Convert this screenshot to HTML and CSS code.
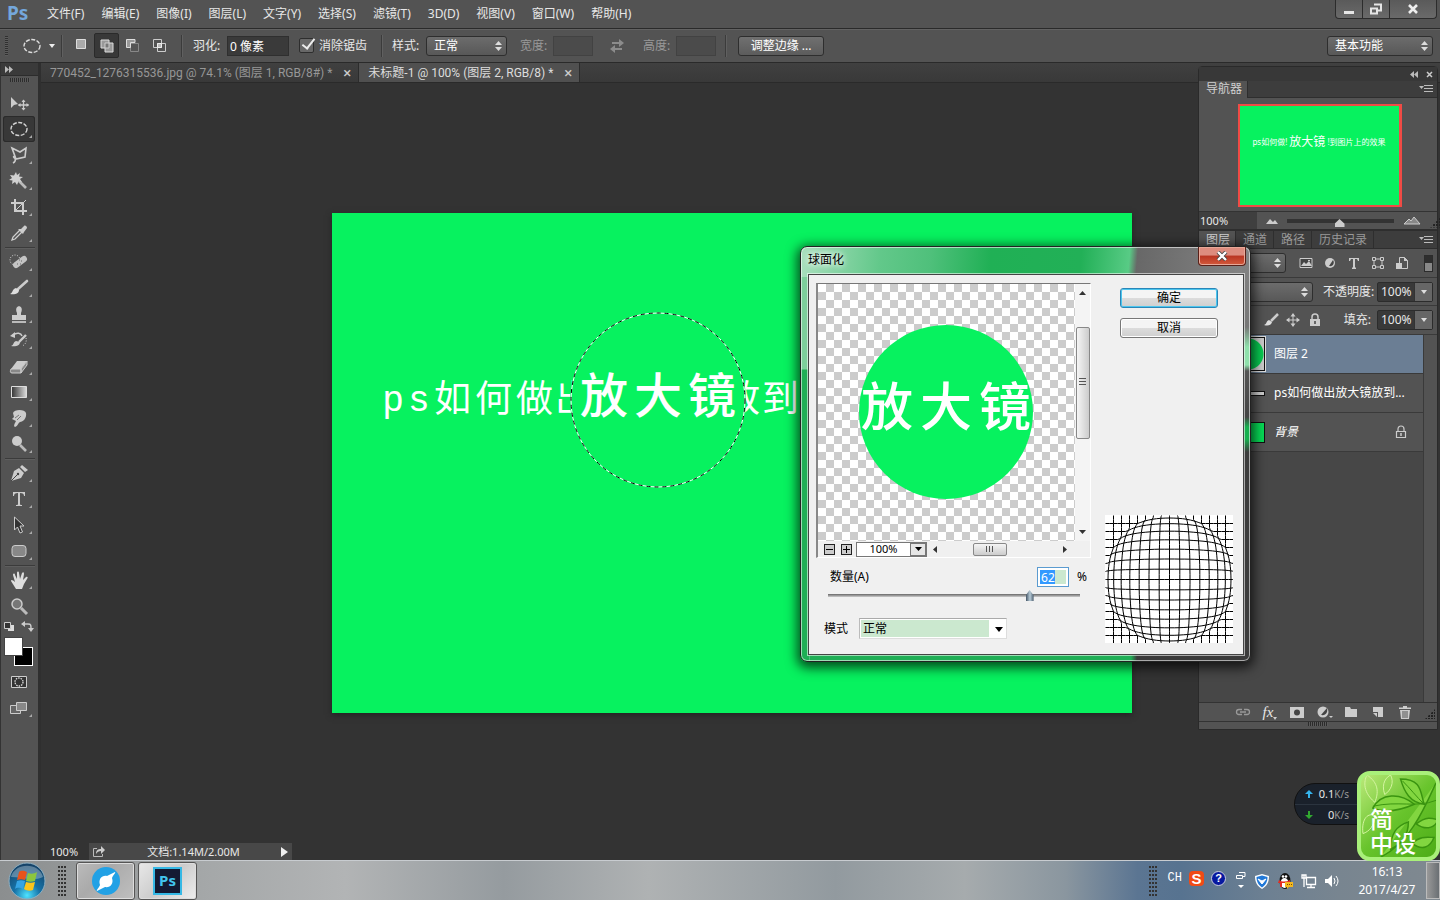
FILE: index.html
```html
<!DOCTYPE html>
<html lang="zh-CN">
<head>
<meta charset="utf-8">
<title>未标题-1</title>
<link rel="stylesheet" href="styles.css">
</head>
<body>
<header class="menubar">
  <span class="logo">Ps</span>
  <nav class="menus">
    <button>文件(F)</button><button>编辑(E)</button><button>图像(I)</button><button>图层(L)</button><button>文字(Y)</button><button>选择(S)</button><button>滤镜(T)</button><button>3D(D)</button><button>视图(V)</button><button>窗口(W)</button><button>帮助(H)</button>
  </nav>
  <div class="winbtns">
    <button aria-label="最小化"><svg width="12" height="12"><path d="M1 8h10v3H1z" fill="#e6e6e6"/></svg></button>
    <button aria-label="还原"><svg width="14" height="12"><path d="M5 1.500h7v6H9M2 5.500h6v5H2z" fill="none" stroke="#e6e6e6" stroke-width="2"/></svg></button>
    <button class="wide" aria-label="关闭"><svg width="12" height="10"><path d="M2 1l8 8M10 1L2 9" stroke="#eee" stroke-width="2.600"/></svg></button>
  </div>
</header>

<section class="options">
  <i class="grip-v"></i>
  <button class="tool-preset" aria-label="椭圆选框"><svg width="36" height="20"><ellipse cx="12" cy="10" rx="8" ry="6.500" fill="none" stroke="#ddd" stroke-width="1.400" stroke-dasharray="4 1.500"/><path d="M29 8h6l-3 4z" fill="#eee"/></svg></button>
  <i class="sep"></i>
  <div class="ops">
    <button aria-label="新选区"><svg width="16" height="16"><path d="M3.500 1.500h9v9h-9z" fill="#aaa" stroke="#ddd"/></svg></button>
    <button class="on" aria-label="添加到选区"><svg width="16" height="16"><path d="M2 2h8v3h4v9H6v-4H2z" fill="#999" stroke="#ddd"/><path d="M6 10V5h4v5z" fill="#777" stroke="#ccc"/></svg></button>
    <button aria-label="从选区减去"><svg width="16" height="16"><path d="M5.500 5.500h8v8h-8z" fill="#555" stroke="#888"/><path d="M2 1.500h8v3H5.500v5H1.500v-8z" fill="#999" stroke="#ddd"/></svg></button>
    <button aria-label="与选区交叉"><svg width="16" height="16"><path d="M2.500 1.500h8v8h-8zM6.500 5.500h8v8h-8z" fill="none" stroke="#ccc"/><path d="M6.500 5.500h4v4h-4z" fill="#bbb" stroke="#eee"/></svg></button>
  </div>
  <i class="sep"></i>
  <label class="lbl" for="feather">羽化:</label>
  <input class="field w62" id="feather" value="0 像素">
  <label class="check"><input type="checkbox" checked><span>消除锯齿</span></label>
  <i class="sep"></i>
  <label class="lbl" for="style">样式:</label>
  <span class="sel w80"><select id="style"><option>正常</option></select><svg width="7" height="12"><path d="M0 5l3.500-4L7 5zM0 7l3.500 4L7 7z" fill="#ddd"/></svg></span>
  <label class="lbl off" for="ow">宽度:</label>
  <input class="field w40 off" id="ow" disabled>
  <button class="swap" aria-label="交换"><svg width="16" height="14"><path d="M3 3h7V0l5 4-5 4V5H3zM13 9H6V6l-5 4 5 4v-3h7z" fill="#8c8c8c"/></svg></button>
  <label class="lbl off" for="oh">高度:</label>
  <input class="field w40 off" id="oh" disabled>
  <i class="sep last"></i>
  <button class="btn">调整边缘 ...</button>
  <span class="sel workspace"><select aria-label="工作区"><option>基本功能</option></select><svg width="7" height="12"><path d="M0 5l3.500-4L7 5zM0 7l3.500 4L7 7z" fill="#ddd"/></svg></span>
</section>

<main class="work">
  <aside class="tools">
    <div class="tools-head"><svg width="8" height="7"><path d="M0 0l4 3.500L0 7zM4 0l4 3.500L4 7z" fill="#bbb"/></svg></div>
    <div class="tools-grip"><i class="grip-h"></i></div>
    <button class="solo" aria-label="移动"><svg viewBox="0 0 20 20"><path d="M2 4v11l3-3 4-1z" fill="#ccc"/><path d="M14.500 7v10M9.500 12h10" stroke="#ccc" stroke-width="1.300"/><path d="M12.500 9l2-2.500 2 2.500zM12.500 15l2 2.500 2-2.500zM11.500 10L9 12l2.500 2zM17.500 10l2.500 2-2.500 2z" fill="#ccc"/></svg></button>
    <button class="on" aria-label="椭圆选框"><svg viewBox="0 0 20 20"><ellipse cx="10" cy="10" rx="8" ry="6.500" fill="none" stroke="#d4d4d4" stroke-width="1.400" stroke-dasharray="4 1.500"/></svg></button>
    <button aria-label="套索"><svg viewBox="0 0 20 20"><path d="M3 3l8 4 6-4-1 9-9 2zM7 14c-4-2-2-4-1-1s0 4-2 5" fill="none" stroke="#ccc" stroke-width="1.600"/></svg></button>
    <button aria-label="魔棒"><svg viewBox="0 0 20 20"><path d="M10 10l7 7" stroke="#bbb" stroke-width="2.600"/><path d="M7 1l1 3 3-2-1 3.500 4 .5-3 2 2 3-3.500-.5L8 14l-2-3-3 2 .5-3.500L0 9l3-2-2-3 4 .5z" fill="#d0d0d0"/></svg></button>
    <button aria-label="裁剪"><svg viewBox="0 0 20 20"><path d="M6 2v12h12M2 6h12v12" fill="none" stroke="#ccc" stroke-width="2"/><path d="M6 14L17 3" stroke="#ccc"/></svg></button>
    <button aria-label="吸管"><svg viewBox="0 0 20 20"><path d="M3 17l1-3 7-7 2 2-7 7z" fill="#555" stroke="#d0d0d0" stroke-width="1.300"/><path d="M9 6l5 5 1-2 3-4c0-2-2-3-3-2l-3 3z" fill="#ccc"/></svg></button>
    <hr>
    <button aria-label="修复画笔"><svg viewBox="0 0 20 20"><circle cx="6" cy="8" r="5" fill="none" stroke="#ddd" stroke-dasharray="1 1.500"/><path d="M7 13l8-6" stroke="#c4c4c4" stroke-width="6" stroke-linecap="round"/><path d="M8 12h1M12 9h1M10 8h1M11 12h1" stroke="#666" stroke-width="1.200"/></svg></button>
    <button aria-label="画笔"><svg viewBox="0 0 20 20"><path d="M18 3L9 11" stroke="#ccc" stroke-width="2.600" stroke-linecap="round"/><path d="M10 12c0 4-5 5-9 4 3-1 2-5 6-6z" fill="#ddd"/></svg></button>
    <button aria-label="图章"><svg viewBox="0 0 20 20"><path d="M8 9C4 0 16 0 12 9v2h5v5H3v-5h5z" fill="#ccc"/><path d="M3 18h14" stroke="#ddd" stroke-width="1.500"/></svg></button>
    <button aria-label="历史画笔"><svg viewBox="0 0 20 20"><path d="M17 5l-7 7" stroke="#ccc" stroke-width="2.400"/><path d="M11 12c0 4-5 5-9 4 3-1 2-4 5-5z" fill="#ccc"/><path d="M4 5c4-3 8-2 9 1" fill="none" stroke="#ccc" stroke-width="1.500"/><path d="M1 6l5-4v6z" fill="#ccc"/><path d="M17 8c1 4-1 7-4 8" fill="none" stroke="#ccc" stroke-dasharray="1 1.500"/></svg></button>
    <button aria-label="橡皮擦"><svg viewBox="0 0 20 20"><path d="M2 13l6-8h10l-6 8z" fill="#ccc"/><path d="M2 13h10v4H3c-2 0-2-2-1-4zM12 13l6-8v4l-6 8z" fill="#888" stroke="#ccc"/></svg></button>
    <button aria-label="渐变"><svg viewBox="0 0 20 20"><defs><linearGradient id="gr"><stop stop-color="#333"/><stop offset="1" stop-color="#ddd"/></linearGradient></defs><path d="M2.500 4.500h15v11h-15z" fill="url(#gr)" stroke="#ddd"/></svg></button>
    <button aria-label="涂抹"><svg viewBox="0 0 20 20"><path d="M4 5c1-4 12-4 13 0 1 5-3 9-6 9-2 1-2 4-5 5-2-1 0-4 1-6l-4-2 2-2z" fill="#ccc"/><path d="M6 10l4-3M8 12l4-4" stroke="#777"/></svg></button>
    <button aria-label="减淡"><svg viewBox="0 0 20 20"><circle cx="8" cy="7" r="5" fill="#ccc"/><path d="M11 11l6 6" stroke="#bbb" stroke-width="2.600"/></svg></button>
    <hr>
    <button aria-label="钢笔"><svg viewBox="0 0 20 20"><path d="M2 18l3-10 5-3 5 5-3 5z" fill="#ccc"/><path d="M11 4l2-2 6 5-3 2z" fill="#ccc"/><path d="M2 18l6-6" stroke="#444"/><circle cx="9" cy="11" r="1.200" fill="#444"/></svg></button>
    <button aria-label="文字"><svg viewBox="0 0 20 20"><path d="M4 3h12v4h-1c0-2-1-3-4-3v11c0 1 1 1 2 1v1H7v-1c1 0 2 0 2-1V4C6 4 5 5 5 7H4z" fill="#ccc"/></svg></button>
    <button aria-label="路径选择"><svg viewBox="0 0 20 20"><path d="M5.500 2v13l3-3 2.500 6 2.500-1-2.500-6H15z" fill="#333" stroke="#ccc"/></svg></button>
    <button aria-label="圆角矩形"><svg viewBox="0 0 20 20"><rect x="3" y="4.500" width="14" height="11" rx="3" fill="#888" stroke="#ccc"/></svg></button>
    <hr>
    <button aria-label="抓手"><svg viewBox="0 0 20 20"><path d="M7 19L2 11c0-2 2-1 4 1L4 5c0-2 2-2 2 0l2 4V3c0-2 2-2 2 0l1 6 2-6c1-1 2-1 2 1l-1 6 3-3c2-1 2 1 1 2l-3 5-2 5z" fill="#ddd"/></svg></button>
    <button class="solo" aria-label="缩放"><svg viewBox="0 0 20 20"><path d="M12 12l6 6" stroke="#bbb" stroke-width="3"/><circle cx="8" cy="8" r="5" fill="#777" stroke="#ccc" stroke-width="1.500"/></svg></button>
    <div class="mini"><svg width="36" height="17"><path d="M7 6h6v6H7z" fill="#ddd"/><path d="M3.500 3.500h6v6h-6z" fill="#333" stroke="#ccc"/><path d="M24 5h3c3 0 3 1 3 5" fill="none" stroke="#ccc" stroke-width="1.500"/><path d="M20 5l4-3v6zM27 9h6l-3 4z" fill="#ccc"/></svg></div>
    <div class="swatches"><i class="back"></i><i class="fore"></i></div>
    <button class="solo" aria-label="快速蒙版"><svg viewBox="0 0 20 20"><path d="M2.500 4.500h15v11h-15z" fill="#333" stroke="#ccc"/><circle cx="10" cy="10" r="4" fill="none" stroke="#ddd" stroke-width="1.300" stroke-dasharray="1.500 1"/></svg></button>
    <button aria-label="屏幕模式"><svg viewBox="0 0 20 20"><path d="M1.500 7.500h10v8h-10z" fill="#666" stroke="#ccc"/><path d="M7.500 4.500h10v8h-10z" fill="#888" stroke="#ccc"/></svg></button>
  </aside>

  <section class="doc">
    <div class="tabs">
      <div class="tab"><span>770452_1276315536.jpg @ 74.1% (图层 1, RGB/8#) *</span><button aria-label="关闭">×</button></div>
      <div class="tab active"><span>未标题-1 @ 100% (图层 2, RGB/8) *</span><button aria-label="关闭">×</button></div>
    </div>
    <div class="stage">
      <div class="art">
        <div class="line"><b>p</b><b>s</b><span>如</span><span>何</span><span>做</span><span class="cut-end">出</span><span class="cut-start">放</span><span>到</span></div>
        <div class="lens"><span>放</span><span>大</span><span>镜</span><svg viewBox="0 0 176 176"><circle cx="88" cy="88" r="87" fill="none" stroke="#fff"/><circle cx="88" cy="88" r="87" fill="none" stroke="#000" stroke-dasharray="4 4"/></svg></div>
      </div>
    </div>
    <footer class="status">
      <span class="pct">100%</span>
      <div class="info"><svg width="14" height="12"><path d="M5 2.500H1.500v8h9V8" fill="none" stroke="#bbb"/><path d="M4 8c0-4 2-5 5-5V0l4 4-4 4V5C7 5 5 6 4 8z" fill="#ccc"/></svg><span>文档:1.14M/2.00M</span><svg width="7" height="10"><path d="M0 0l7 5-7 5z" fill="#eee"/></svg></div>
    </footer>
  </section>

  <aside class="panels">
    <div class="phead"><svg width="8" height="7"><path d="M4 0L0 3.500 4 7zM8 0L4 3.500 8 7z" fill="#bbb"/></svg><svg width="7" height="7"><path d="M1 1l5 5M6 1L1 6" stroke="#ccc" stroke-width="1.500"/></svg></div>
    <div class="ptabs"><button class="active">导航器</button><svg width="14" height="10"><path d="M0 2h5L2.500 5z" fill="#bbb"/><path d="M5 1.500h9M5 4.500h9M5 7.500h9" stroke="#bbb"/></svg></div>
    <div class="nav-body"><div class="thumb"><span>ps如何做!</span><b>放大镜</b><span>!到图片上的效果</span></div></div>
    <div class="nav-zoom"><input value="100%" aria-label="缩放比例"><svg width="12" height="6"><path d="M0 6l4-5 3 3 2-2 3 4z" fill="#ccc"/></svg><input type="range" aria-label="导航缩放" min="0" max="100" value="49"><svg width="18" height="9"><path d="M1 8l5-5 2 2 3-4 6 7z" fill="#888" stroke="#ccc"/></svg><i class="corner"></i></div>
    <div class="ptabs layers-tabs"><button class="active">图层</button><button>通道</button><button>路径</button><button>历史记录</button><svg width="14" height="10"><path d="M0 2h5L2.500 5z" fill="#bbb"/><path d="M5 1.500h9M5 4.500h9M5 7.500h9" stroke="#bbb"/></svg></div>
    <div class="prow filter">
      <span class="sel"><select aria-label="滤镜类型"><option></option></select><svg width="7" height="12"><path d="M0 5l3.500-4L7 5zM0 7l3.500 4L7 7z" fill="#ddd"/></svg></span>
      <button aria-label="像素"><svg width="14" height="14"><path d="M1 2.500h12v9H1z" fill="#444" stroke="#ccc"/><path d="M2 10l3-4 2 2 3-3 3 5zM9 4h2v1H9z" fill="#ccc"/></svg></button>
      <button aria-label="调整"><svg width="14" height="14"><circle cx="7" cy="7" r="5" fill="#ccc"/><path d="M10 4c2 3 0 7-4 6z" fill="#444"/></svg></button>
      <button aria-label="文字"><svg width="14" height="14"><path d="M2 2h10v3h-1L10 3H8v8l1 1v1H5v-1l1-1V3H4L3 5H2z" fill="#ccc"/></svg></button>
      <button aria-label="形状"><svg width="14" height="14"><path d="M3 3h8v8H3z" fill="none" stroke="#ccc"/><path d="M1.500 1.500h3v3h-3zM9.500 1.500h3v3h-3zM1.500 9.500h3v3h-3zM9.500 9.500h3v3h-3z" fill="#535353" stroke="#ccc"/></svg></button>
      <button aria-label="智能对象"><svg width="14" height="14"><path d="M4.500 1.500h5l3 3v8h-8z" fill="#555" stroke="#ccc"/><path d="M9 1v4h4zM1 7h6v6H1z" fill="#ccc"/></svg></button>
      <i class="switch"></i>
    </div>
    <div class="prow blend">
      <span class="sel"><select aria-label="混合模式"><option></option></select><svg width="7" height="12"><path d="M0 5l3.500-4L7 5zM0 7l3.500 4L7 7z" fill="#ddd"/></svg></span>
      <label for="opa">不透明度:</label><span class="num"><input id="opa" value="100%"><button aria-label="展开"><svg width="6" height="4"><path d="M0 0h6L3 4z" fill="#ddd"/></svg></button></span>
    </div>
    <div class="prow locks">
      <svg width="18" height="16"><path d="M16 2L9 9" stroke="#ccc" stroke-width="2.500"/><path d="M10 10c-1 4-5 4-8 3 3-1 2-4 5-5z" fill="#ddd"/></svg>
      <svg width="14" height="14"><path d="M7 1v12M1 7h12" stroke="#ccc"/><path d="M4.500 3.500L7 0l2.500 3.500zM4.500 10.500L7 14l2.500-3.500zM3.500 4.500L0 7l3.500 2.500zM10.500 4.500L14 7l-3.500 2.500z" fill="#ccc"/></svg>
      <svg width="12" height="14"><path d="M3 6V4c0-4 6-4 6 0v2" fill="none" stroke="#ccc" stroke-width="1.500"/><path d="M1 6h10v7H1z" fill="#ccc"/><path d="M6 8v3" stroke="#444" stroke-width="1.500"/></svg>
      <label for="fil">填充:</label><span class="num"><input id="fil" value="100%"><button aria-label="展开"><svg width="6" height="4"><path d="M0 0h6L3 4z" fill="#ddd"/></svg></button></span>
    </div>
    <ul class="layers">
      <li class="active"><i class="lthumb disc"></i><span>图层 2</span></li>
      <li><i class="lthumb strip"></i><span>ps如何做出放大镜放到...</span></li>
      <li><i class="lthumb flat"></i><em>背景</em><svg width="12" height="14"><path d="M3 6V4c0-4 6-4 6 0v2M1.500 6.500h9v6h-9z" fill="none" stroke="#ccc" stroke-width="1.200"/><path d="M6 8v3" stroke="#ccc" stroke-width="1.500"/></svg></li>
    </ul>
    <div class="pfoot">
      <button aria-label="链接"><svg width="16" height="14"><path d="M7 4.500H4a2.500 2.500 0 000 5h3M9 4.500h3a2.500 2.500 0 010 5H9M5 7h6" fill="none" stroke="#999" stroke-width="1.300"/></svg></button>
      <button aria-label="样式" class="fx">fx<svg width="4" height="3"><path d="M0 0h4L2 3z" fill="#ccc"/></svg></button>
      <button aria-label="蒙版"><svg width="16" height="14"><path d="M1 2h14v11H1z" fill="#ccc"/><circle cx="8" cy="7.500" r="3" fill="#444"/></svg></button>
      <button aria-label="调整"><svg width="18" height="14"><circle cx="8" cy="7" r="5.500" fill="#ccc"/><path d="M12 3c1 4-1 8-6 7z" fill="#444"/><path d="M14 11h4l-2 2z" fill="#ccc"/></svg></button>
      <button aria-label="组"><svg width="16" height="14"><path d="M2 2h5l1 2h6v8H2z" fill="#ccc"/></svg></button>
      <button aria-label="新建"><svg width="16" height="14"><path d="M3 2h10v10H8V7H3z" fill="#ccc"/><path d="M3 8h4v4z" fill="#ccc"/></svg></button>
      <button aria-label="删除"><svg width="16" height="14"><path d="M3 5h10l-1 9H4zM2 2.500h12v1.500H2zM6 1h4v2H6z" fill="#ccc"/><path d="M6 6v7M8 6v7M10 6v7" stroke="#555"/></svg></button>
      <i class="corner"></i>
    </div>
    <div class="pend"><i class="grip-h"></i></div>
  </aside>
</main>

<footer class="taskbar">
  <button class="orb" aria-label="开始"><svg viewBox="0 0 38 38"><defs><radialGradient id="orb" cx=".5" cy=".9" r=".9"><stop stop-color="#4fe3ff"/><stop offset=".4" stop-color="#1673a8"/><stop offset="1" stop-color="#163f63"/></radialGradient></defs><circle cx="19" cy="19" r="18" fill="url(#orb)" stroke="#8fb0c2"/><path d="M3 15C7 0 31 0 35 15c-10 5-22 0-32 0z" fill="#fff" opacity=".3"/><path d="M11 10c3-2 5-1 8 0l-2 8c-3-1-5-1-8 0z" fill="#e8541c"/><path d="M20 11c3 1 6 1 9-1l-2 9c-3 1-6 1-9 0z" fill="#8cc63e"/><path d="M9 19c3-1 5-1 8 0l-2 8c-3-1-5-2-8 0z" fill="#35a4e4"/><path d="M18 20c3 1 6 1 9 0l-2 8c-3 1-6 1-9-1z" fill="#fcc51b"/></svg></button>
  <i class="dots"></i>
  <button class="task" aria-label="浏览器"><svg width="30" height="30"><circle cx="15" cy="15" r="14" fill="#22a1e5"/><path d="M24 6c1 1-2 3-3 6 2 6-2 10-7 9l-8 4c-1-1 2-3 3-6-2-6 2-10 7-9z" fill="#fff"/></svg></button>
  <button class="task light" aria-label="Photoshop"><span class="ps">Ps</span></button>
  <div class="tray">
    <i class="dots"></i>
    <span class="ch">CH</span>
    <span class="sogou">S</span>
    <span class="help">?</span>
    <svg width="12" height="20"><path d="M4 1.500h6v4H8M1.500 4.500h6v3h-6z" fill="none" stroke="#fff"/><path d="M3 14h6l-3 3z" fill="#fff"/></svg>
    <svg width="16" height="16"><path d="M8 1l7 2c0 6-2 10-7 13C3 13 1 9 1 3z" fill="#fff"/><path d="M8 2.500l5.500 1.500c0 5-2 8-5.500 10.500C4.500 12 2.500 9 2.500 4z" fill="#2179d8"/><path d="M4 6l4 5 4-5-4 2z" fill="#fff" stroke="#fff"/></svg>
    <svg width="17" height="18"><ellipse cx="8" cy="9" rx="5.500" ry="8" fill="#111"/><ellipse cx="7.500" cy="11" rx="4" ry="5" fill="#fff"/><path d="M2 8c3 2 7 2 11 0v3H5v4H3v-4H1z" fill="#e52b20"/><circle cx="6" cy="4.500" r="1.300" fill="#fff"/><circle cx="9" cy="4.500" r="1.300" fill="#fff"/><path d="M8 10h8v5h-4l-2 2v-2H8z" fill="#f5b81d"/><path d="M10 12.500h5" stroke="#7a4b00" stroke-dasharray="1 1"/></svg>
    <svg width="16" height="16"><path d="M5.500 4.500h9v7h-9zM10 12v2M6 14.500h8M3 2v12M1 5h4V2H1z" fill="none" stroke="#fff" stroke-width="1.300"/></svg>
    <svg width="16" height="16"><path d="M1 6h3l4-4v12l-4-4H1z" fill="#fff"/><path d="M10 5q2 3 0 6M12 3q4 5 0 10" fill="none" stroke="#fff"/></svg>
  </div>
  <div class="clock"><span>16:13</span><span>2017/4/27</span></div>
  <button class="peek" aria-label="显示桌面"></button>
</footer>

<div class="net"><div><svg width="8" height="8"><path d="M4 0l4 4H5v4H3V4H0z" fill="#35b4ee"/></svg><span>0.1<small>K/s</small></span></div><div><svg width="8" height="8"><path d="M4 8l4-4H5V0H3v4H0z" fill="#31a830"/></svg><span>0<small>K/s</small></span></div></div>
<div class="ime"><svg viewBox="0 0 76 84" preserveAspectRatio="none"><path d="M20 84C50 70 66 30 76 8M12 34C20 18 40 18 54 30 36 38 22 38 12 34zM40 4c22 0 20 14 24 26C50 28 44 18 40 4zM56 50c10-8 16-6 22-4-4 10-14 10-22 4zM30 76c0-16 6-24 18-28 0 14-6 22-18 28zM52 70c8-8 16-6 22-6-4 10-12 14-22 6z" fill="#82d640" stroke="#3a9410" stroke-width="1.500"/><path d="M12 32c26-6 44 2 64-6M42 6c8 8 14 16 22 24" fill="none" stroke="#3a9410"/><path d="M14 28C0 16 4 4 6 0 18 8 18 18 14 28zM2 60C0 44 8 38 14 42 14 52 8 58 2 60zM24 20C20 8 26 2 30 0c4 8 0 16-6 20z" fill="none" stroke="#d5f5a2"/></svg><span>简</span><span>中设</span></div>

<dialog class="dlg" open>
  <div class="dlg-title"><span>球面化</span><button aria-label="关闭"><svg width="12" height="10"><path d="M2 1l8 8M10 1L2 9" stroke="#444" stroke-width="4"/><path d="M2 1l8 8M10 1L2 9" stroke="#fff" stroke-width="2.400"/></svg></button></div>
  <form class="dlg-body" onsubmit="return false">
    <div class="left">
      <div class="preview">
        <div class="checker"><div class="ball"><span>放</span><span>大</span><span>镜</span></div></div>
        <div class="vbar"><svg width="7" height="4"><path d="M0 4l3.500-4L7 4z" fill="#333"/></svg><i></i><svg width="7" height="4"><path d="M0 0h7L3.500 4z" fill="#333"/></svg></div>
        <div class="hbar"><button aria-label="缩小"><svg width="7" height="7"><path d="M0 3.500h7" stroke="#000"/></svg></button><button aria-label="放大"><svg width="7" height="7"><path d="M0 3.500h7M3.500 0v7" stroke="#000"/></svg></button><span class="zoom"><input value="100%" aria-label="预览比例"><b><svg width="7" height="4"><path d="M0 0h7L3.500 4z"/></svg></b></span><svg width="4" height="7"><path d="M4 0v7L0 3.500z" fill="#333"/></svg><i></i><svg width="4" height="7"><path d="M0 0v7l4-3.500z" fill="#333"/></svg></div>
      </div>
      <div class="amount"><label for="amt">数量(A)</label><span class="amt"><input id="amt" value="62"></span><span>%</span></div>
      <input class="slider" type="range" min="-100" max="100" value="62" aria-label="数量">
      <div class="mode"><label for="mode">模式</label><span><select id="mode"><option>正常</option></select><svg width="8" height="5"><path d="M0 0h8L4 5z"/></svg></span></div>
    </div>
    <div class="right">
      <button class="ok">确定</button>
      <button>取消</button>
      <svg class="mesh" viewBox="0 0 128 128"><path id="mesh" d=""/></svg>
    </div>
  </form>
</dialog>
<script src="mesh.js"></script>
</body>
</html>
```
FILE: styles.css
```css
* { box-sizing: border-box; }
html, body { height: 100%; margin: 0; }
body {
  display: flex; flex-direction: column; overflow: hidden; position: relative;
  background: #333; color: #e8e8e8;
  font: 12px/16px "Noto Sans", "Noto Sans CJK SC", sans-serif;
}
button, input, select { font: inherit; color: inherit; margin: 0; padding: 0; border: 0; background: none; border-radius: 0; }
i, em { font-style: normal; }
svg { display: block; flex: none; }
button { display: flex; align-items: center; justify-content: center; flex: none; white-space: nowrap; }

/* menu bar */
.menubar { display: flex; height: 28px; flex: none; background: #535353; }
.logo { width: 47px; padding-left: 7px; font: bold 19px/26px "Noto Sans", sans-serif; color: #74a7dc; }
.menus { display: flex; gap: 17px; align-items: center; flex: 1; }
.winbtns { display: flex; height: 19px; margin-right: 3px; border: 1px solid #2c2c2c; border-top: 0; border-radius: 0 0 4px 4px; background: linear-gradient(#5a5a5a, #6a6a6a); }
.winbtns button { width: 27px; border-right: 1px solid #2c2c2c; }
.winbtns .wide { width: 46px; border: 0; }

/* options bar */
.options { display: flex; align-items: center; height: 34px; flex: none; background: #535353; border-top: 1px solid #2a2a2a; box-shadow: inset 0 1px #626262; padding: 0 7px 0 5px; }
.grip-v { width: 3px; height: 20px; background: repeating-linear-gradient(#303030 0 1px, #5c5c5c 1px 2px); }
.tool-preset { margin-left: 12px; }
.sep { width: 2px; height: 22px; background: #3b3b3b; border-right: 1px solid #606060; margin: 0 9px 0 12px; flex: none; }
.tool-preset + .sep { margin: 0 5px 0 5px; }
.ops { display: flex; gap: 1px; }
.ops button { width: 25px; height: 25px; }
.ops .on { background: #383838; border: 1px solid #2a2a2a; border-radius: 2px; }
.ops + .sep { margin-left: 10px; margin-right: 10px; }
.lbl { width: 34px; flex: none; }
.lbl.off { color: #999; width: 33px; }
.field { background: #3a3a3a; border: 1px solid #2f2f2f; height: 20px; padding: 0 2px; color: #fff; }
.field.off { background: #4b4b4b; border-color: #424242; }
.w62 { width: 62px; }
.w40 { width: 40px; }
.check { display: flex; align-items: center; gap: 5px; margin: 0 2px 0 10px; }
.check input { appearance: none; width: 15px; height: 15px; background: #686868; border: 1px solid #2e2e2e; border-radius: 2px; position: relative; }
.check input::after { content: ""; position: absolute; left: 5px; top: -3px; width: 5px; height: 11px; border: solid #eee; border-width: 0 2px 2px 0; transform: rotate(38deg); }
.options .last { margin: 0 11px 0 9px; }
.sel { position: relative; display: flex; height: 20px; flex: none; border: 1px solid #2e2e2e; border-radius: 3px; background: linear-gradient(#6c6c6c, #585858); }
.sel select { appearance: none; width: 100%; padding-left: 7px; color: #fff; }
.sel svg { position: absolute; right: 4px; top: 3px; }
.w80 { width: 81px; margin-right: 13px; }
.swap { margin: 0 18px 0 16px; }
.btn { height: 20px; width: 86px; border: 1px solid #2e2e2e; border-radius: 3px; background: linear-gradient(#707070, #5c5c5c); color: #fff; }
.workspace { width: 106px; margin-left: auto; }

/* work area */
.work { flex: 1; min-height: 0; display: flex; position: relative; border-top: 1px solid #2a2a2a; }
.tools { width: 41px; flex: none; background: #535353; border-right: 3px solid #2f2f2f; border-left: 1px solid #333; display: flex; flex-direction: column; }
.tools-head { height: 13px; background: #3a3a3a; padding: 3px 4px; border-bottom: 1px solid #2c2c2c; }
.tools-grip { height: 14px; display: flex; justify-content: center; padding-top: 2px; }
.grip-h { width: 20px; height: 4px; background: repeating-linear-gradient(90deg, #2c2c2c 0 1px, #5a5a5a 1px 2px); }
.tools button { height: 26px; width: 32px; margin-left: 2px; position: relative; }
.tools button svg { width: 20px; height: 20px; }
.tools button::after { content: ""; position: absolute; right: 3px; bottom: 4px; border: solid transparent; border-width: 0 0 3px 3px; border-bottom-color: #aaa; }
.tools .solo::after { display: none; }
.tools .on { background: #383838; box-shadow: inset 0 0 0 1px #2a2a2a; border-radius: 3px; }
.tools hr { width: 30px; height: 2px; margin: 1px 4px 0; border: 0; background: #3b3b3b; border-bottom: 1px solid #5e5e5e; flex: none; }
.mini { height: 17px; }
.swatches { height: 33px; position: relative; }
.swatches i { position: absolute; width: 19px; height: 19px; }
.fore { left: 3px; top: 1px; background: #fff; border: 1px solid #444; }
.back { left: 13px; top: 11px; background: #000; border: 1px solid #fff; }
.doc { flex: 1; min-width: 0; display: flex; flex-direction: column; background: #333; }
.tabs { display: flex; height: 20px; flex: none; background: linear-gradient(#404040, #393939); border-bottom: 1px solid #2a2a2a; }
.tab { display: flex; align-items: center; gap: 9px; padding: 0 5px 0 9px; color: #979797; border-right: 1px solid #2c2c2c; white-space: nowrap; font-family: Roboto, "Noto Sans CJK SC", sans-serif; }
.tab button { width: 12px; font-size: 15px; color: #ccc; }
.tab.active { background: #505050; color: #ddd; }
.stage { flex: 1; min-height: 0; display: flex; align-items: center; justify-content: center; padding-right: 17px; }
.art { width: 800px; height: 500px; flex: none; background: #07f25f; position: relative; overflow: hidden; box-shadow: 0 2px 6px #222; color: #fff; font-family: "Noto Sans CJK SC", sans-serif; }
.line { position: absolute; left: 48px; top: 155px; display: flex; font-size: 37px; line-height: 56px; }
.line span { width: 41px; display: flex; justify-content: center; flex: none; }
.line b { width: 26px; text-align: center; font: 36px/62px "Liberation Sans", sans-serif; }
.line .cut-end { width: 17px; margin-right: 173px; justify-content: flex-start; overflow: hidden; }
.line .cut-start { width: 15px; justify-content: flex-end; overflow: hidden; }
.lens { position: absolute; left: 238px; top: 99px; width: 176px; height: 176px; border-radius: 50%; background: #07f25f; display: flex; justify-content: center; gap: 6px; font-size: 48px; line-height: 160px; font-weight: 500; }
.lens svg { position: absolute; inset: 0; }
.status { display: flex; height: 17px; flex: none; font-size: 11px; align-items: center; }
.pct { width: 48px; padding-left: 9px; }
.info { width: 203px; height: 17px; padding: 0 4px 0 3px; background: #484848; display: flex; align-items: center; justify-content: space-between; }

/* floating panels */
.panels { position: absolute; right: 2px; top: 3px; width: 240px; height: 664px; background: #535353; border: 1px solid #2a2a2a; border-radius: 4px 4px 0 0; display: flex; flex-direction: column; }
.phead { height: 14px; flex: none; display: flex; justify-content: flex-end; align-items: center; gap: 8px; padding-right: 4px; background: #383838; }
.ptabs { height: 17px; flex: none; display: flex; background: #3d3d3d; border-bottom: 1px solid #2e2e2e; align-items: center; }
.ptabs button { height: 17px; padding: 0 6px 0 7px; color: #999; border-right: 1px solid #2e2e2e; }
.ptabs .active { background: #535353; color: #d0d0d0; padding-right: 5px; }
.ptabs svg { margin-left: auto; margin-right: 4px; }
.nav-body { height: 113px; flex: none; display: flex; justify-content: center; padding: 6px 0 0 3px; }
.thumb { width: 164px; height: 103px; border: 2px solid #f04b45; border-right-width: 3px; background: #07f25f; display: flex; align-items: center; justify-content: center; gap: 2px; padding-bottom: 28px; font-size: 8px; line-height: 16px; color: #fff; white-space: nowrap; }
.thumb b { font-size: 12px; font-weight: 400; }
.nav-zoom { height: 20px; flex: none; border-top: 1px solid #333; border-bottom: 2px solid #2e2e2e; display: flex; align-items: center; gap: 9px; font-size: 11px; }
.nav-zoom > input:first-child { width: 58px; height: 17px; background: #3f3f3f; padding-left: 1px; }
.nav-zoom input[type=range] { appearance: none; width: 107px; height: 14px; background: linear-gradient(#333, #333) center / 100% 4px no-repeat; }
.nav-zoom input::-webkit-slider-thumb { appearance: none; width: 10px; height: 8px; margin-top: 5px; background: #ccc; clip-path: polygon(50% 0, 100% 60%, 100% 100%, 0 100%, 0 60%); }
.corner { width: 10px; height: 10px; margin: 4px 2px 0 auto; background: radial-gradient(circle at 1px 1px, #222 1px, transparent 1px) 0 0 / 3px 3px; clip-path: polygon(100% 0, 100% 100%, 0 100%); flex: none; }
.layers-tabs { height: 18px; }
.prow { flex: none; display: flex; align-items: center; border-bottom: 1px solid #3a3a3a; padding: 0 4px; }
.filter { height: 29px; }
.filter .sel { width: 83px; margin-right: 8px; }
.filter button { width: 24px; height: 20px; }
.switch { width: 9px; height: 17px; margin-left: auto; background: linear-gradient(#2e2e2e 50%, #888 50%); border: 1px solid #2c2c2c; }
.blend { height: 28px; }
.blend .sel { width: 110px; margin-right: 10px; }
.blend label { flex: 1; white-space: nowrap; }
.num { display: flex; width: 56px; height: 20px; border: 1px solid #2c2c2c; background: #393939; border-radius: 2px; }
.num input { width: 36px; padding-left: 3px; }
.num button { width: 18px; background: #666; border-left: 1px solid #333; }
.locks { height: 29px; gap: 6px; padding-left: 63px; }
.locks svg:nth-child(3) { margin-left: 3px; }
.locks label { flex: 1; text-align: right; }
.layers { flex: 1; margin: 0 13px 0 0; padding: 0; list-style: none; background: #474747; border-right: 1px solid #3a3a3a; }
.layers li { height: 39px; display: flex; align-items: center; gap: 9px; background: #535353; border-bottom: 1px solid #3a3a3a; padding: 0 16px 0 28px; white-space: nowrap; color: #fff; }
.layers .active { background: #6b7e94; }
.layers em { font-style: italic; }
.layers li svg { margin-left: auto; }
.lthumb { width: 38px; flex: none; border: 1px solid #111; }
.disc { height: 34px; background: radial-gradient(circle at 20px 16px, #07c950 15px, #ccc 16px); outline: 1px solid #ddd; }
.strip { height: 5px; background: #ccc; }
.flat { height: 21px; background: #07d955; }
.pfoot { height: 20px; flex: none; display: flex; align-items: center; gap: 3px; padding-left: 32px; border-top: 1px solid #333; border-bottom: 1px solid #333; }
.pfoot button { width: 24px; height: 16px; }
.pfoot .fx { font: italic 15px/16px "Liberation Serif", serif; align-items: flex-end; }
.pend { height: 7px; flex: none; display: flex; justify-content: center; }

/* taskbar */
.taskbar { height: 40px; flex: none; display: flex; align-items: center; border-top: 1px solid #c8ccd0; padding-left: 8px;
  background: linear-gradient(90deg, #8b8e8f 0, #a4a7a8 14%, #b2b4b5 24%, #959b9f 35%, #afb2b3 45%, #929a9f 58%, #a6abad 67%, #8a969f 74%, #5b7592 79%, #577390 82%, #6d8092 88%, #788590 93%, #808990 100%); }
.orb { width: 38px; height: 38px; }
.dots { width: 9px; height: 30px; margin: 0 9px 0 12px; flex: none; background: radial-gradient(circle at 1px 1px, #333 1px, transparent 1px) 0 0 / 3px 4px; }
.task { width: 59px; height: 38px; border: 1px solid #555; border-radius: 3px; box-shadow: inset 0 0 0 1px #ddd; background: linear-gradient(135deg, #bbb, #aaa 40%, #bfbfbf); margin-right: 3px; }
.task.light { background: linear-gradient(135deg, #e8e8e8, #ccc 50%, #eee); }
.ps { width: 29px; height: 28px; border: 2px solid #35b8e5; background: #141a33; color: #42c4ee; font: bold 15px/23px "Noto Sans", sans-serif; }
.tray { margin-left: auto; display: flex; align-items: center; gap: 7px; color: #fff; }
.tray .dots { margin: 0 3px 0 0; }
.ch { font: 12px/16px "Liberation Mono", monospace; margin-bottom: 5px; }
.sogou { width: 15px; height: 15px; border-radius: 4px; background: #f04b16; font: bold 15px/15px "Liberation Sans", sans-serif; text-align: center; margin-bottom: 4px; }
.help { width: 15px; height: 15px; border-radius: 50%; border: 1px solid #ccd; background: #0719a0; font: bold 11px/13px "Liberation Sans", sans-serif; text-align: center; margin: 0 2px 4px 0; }
.clock { width: 78px; margin: 0 0 0 8px; display: flex; flex-direction: column; text-align: center; line-height: 18px; color: #fff; }
.peek { width: 14px; height: 37px; border: 1px solid #bbb; background: linear-gradient(90deg, #999, #6a6f73); }

/* desktop widgets */
.net { position: absolute; right: 76px; bottom: 75px; width: 70px; height: 42px; border-radius: 21px 0 0 21px; background: #1a212b; border: 1px solid #111; }
.net div { height: 20px; display: flex; align-items: center; justify-content: space-between; padding: 0 14px 0 10px; font-size: 11px; }
.net div + div { border-top: 1px solid #2b343f; }
.net small { font-size: 10px; color: #999; }
.ime { position: absolute; right: 0; bottom: 39px; width: 83px; height: 90px; border: 4px solid #a9f07a; border-radius: 13px; background: linear-gradient(135deg, #b9e878, #68c42c 50%, #4dac17); overflow: hidden; padding: 31px 0 0 9px; color: #fff; font: 500 23px/24px "Noto Sans CJK SC", sans-serif; }
.ime svg { position: absolute; inset: 0; width: 100%; height: 100%; }
.ime span { display: block; position: relative; }

/* filter dialog */
.dlg { position: absolute; left: 800px; top: 246px; width: 451px; height: 416px; margin: 0; padding: 0 6px 6px 7px; border: 1px solid #222; border-radius: 7px; color: #000; box-shadow: inset 0 0 0 1px #ffffff90, 0 3px 12px 3px #000000b0; display: flex; flex-direction: column;
  background:
    linear-gradient(90deg, transparent 330px, #3a3a3a 336px) 0 100% / 100% 10px no-repeat,
    linear-gradient(#858585 0, #777 80px, #8fe0ab 100px, #8fe0ab 118px, #555 124px, #444 170px, #17b04f 180px, #17b04f 192px, #3c3c3c 205px) 100% 0 / 8px 100% no-repeat,
    linear-gradient(transparent 122px, #1fae55 123px) 0 0 / 8px 100% no-repeat,
    linear-gradient(95deg, #a9dfbd 0, #62c88a 80px, #4fc07b 130px, #20b055 190px, #22b057 280px, #58cb85 328px, #686868 336px, #858585 100%) 0 0 / 100% 30px no-repeat,
    linear-gradient(90deg, #7dcf9b 8px, #1fae55 9px); }
.dlg-title { height: 27px; flex: none; display: flex; justify-content: space-between; line-height: 25px; }
.dlg-title span { text-shadow: 0 0 6px #fff, 0 0 6px #fff; }
.dlg-title button { width: 48px; height: 19px; margin-right: -2px; border: 1px solid #5a2018; border-top: 0; border-radius: 0 0 4px 4px; box-shadow: inset 0 0 0 1px #e8a898; background: linear-gradient(#dd8c7e 45%, #b93522 50%, #d35a3c); }
.dlg-body { flex: 1; display: flex; background: #f0f0f0; border: 1px solid #444; outline: 1px solid #ffffff90; padding: 8px 11px 11px 7px; }
.left { width: 276px; }
.preview { width: 275px; display: grid; grid-template-columns: 257px 1fr; grid-template-rows: 257px 16px; border: 1px solid #fff; border-top: 1px solid #777; border-left: 2px solid #888; }
.checker { background: repeating-conic-gradient(#ccc 0 25%, #fff 0 50%) 0 0 / 16px 16px; padding: 41px 0 0 41px; overflow: hidden; }
.ball { width: 174px; height: 174px; border-radius: 50%; background: #07f25f; display: flex; align-items: center; justify-content: center; gap: 7px; padding-bottom: 16px; overflow: hidden; color: #fff; font: 500 52px/60px "Noto Sans CJK SC", sans-serif; }
.vbar { display: flex; flex-direction: column; align-items: center; justify-content: space-between; padding: 7px 0; background: #f4f4f4; }
.vbar i { width: 14px; height: 112px; margin-bottom: 60px; border: 1px solid #888; border-radius: 2px; background: repeating-linear-gradient(#555 0 1px, transparent 1px 3px) center / 7px 9px no-repeat, linear-gradient(90deg, #f5f5f5, #ccc); }
.hbar { grid-column: 1 / 3; display: flex; align-items: center; gap: 6px; padding: 0 23px 0 6px; }
.hbar button { width: 11px; height: 11px; border: 1px solid #222; background: #ccc; }
.zoom { display: flex; width: 71px; height: 15px; border: 1px solid #777; background: #fff; margin-left: -2px; }
.zoom input { width: 53px; text-align: center; font-size: 11px; }
.zoom b { flex: 1; border: 1px solid #777; background: #e6e6e6; display: flex; align-items: center; justify-content: center; }
.hbar > i { width: 34px; height: 13px; margin: 0 auto 0 30px; border: 1px solid #888; border-radius: 2px; background: repeating-linear-gradient(90deg, #555 0 1px, transparent 1px 3px) center / 8px 6px no-repeat, linear-gradient(#f5f5f5, #ccc); }
.amount { display: flex; align-items: center; padding: 9px 4px 0 14px; gap: 8px; }
.amount label { flex: 1; }
.amt { display: flex; }
.amt input { width: 32px; height: 20px; padding: 0 3px; border: 1px solid #5a9bd0; box-shadow: inset 0 0 0 2px #fff; background: linear-gradient(90deg, #3399ff 17px, #cbe8cf 17px); color: #fff; }
.slider { appearance: none; display: block; width: 252px; height: 15px; margin: 1px 0 0 12px; background: linear-gradient(#777 1px, #bbb 2px) center / 100% 3px no-repeat; }
.slider::-webkit-slider-thumb { appearance: none; width: 8px; height: 11px; background: linear-gradient(90deg, #456, #b8ccd8, #456); clip-path: polygon(50% 0, 100% 50%, 100% 100%, 0 100%, 0 50%); }
.mode { display: flex; align-items: center; gap: 11px; padding: 15px 0 0 8px; }
.mode span { position: relative; }
.mode select { appearance: none; width: 148px; height: 21px; padding-left: 3px; border: 1px solid #bbb; border-color: #aaa #ddd #ddd #bbb; background: linear-gradient(90deg, #cbe8cf 129px, #fff 129px); box-shadow: inset 0 0 0 1px #fff; }
.mode svg { position: absolute; right: 4px; top: 9px; }
.right { flex: 1; display: flex; flex-direction: column; align-items: center; gap: 10px; padding-top: 5px; padding-left: 14px; }
.right button { width: 98px; height: 20px; border: 1px solid #777; border-radius: 3px; box-shadow: inset 0 0 0 1px #fff; background: linear-gradient(#f4f4f4 48%, #dcdcdc 52%, #cfcfcf); }
.right .ok { border-color: #2a86b8; box-shadow: inset 0 0 0 1px #4cc6ee; }
.mesh { width: 128px; height: 128px; margin-top: auto; background: #fff; }
.mesh path { fill: none; stroke: #000; stroke-width: 1; }
```
FILE: mesh.js
```js
// Draws a grid bulged by a sphere of the given strength.
const R = 64, amount = 0.62;
function bulge(x, y) {
  const dx = x - R, dy = y - R, s = Math.hypot(dx, dy) / R;
  if (s >= 1 || s === 0) return [x, y];
  let lo = 0, hi = 1;
  for (let i = 0; i < 20; i++) {
    const m = (lo + hi) / 2;
    if ((1 - amount) * m + amount * 2 / Math.PI * Math.asin(m) < s) lo = m; else hi = m;
  }
  return [R + dx * lo / s, R + dy * lo / s];
}
let d = '';
for (let k = 8; k < 128; k += 8) {
  for (const flip of [false, true]) {
    for (let t = 0; t <= 128; t += 4) {
      const p = flip ? bulge(t, k) : bulge(k, t);
      d += (t ? 'L' : 'M') + (p[0] + 0.5).toFixed(1) + ' ' + (p[1] + 0.5).toFixed(1);
    }
  }
}
document.getElementById('mesh').setAttribute('d', d);
```
